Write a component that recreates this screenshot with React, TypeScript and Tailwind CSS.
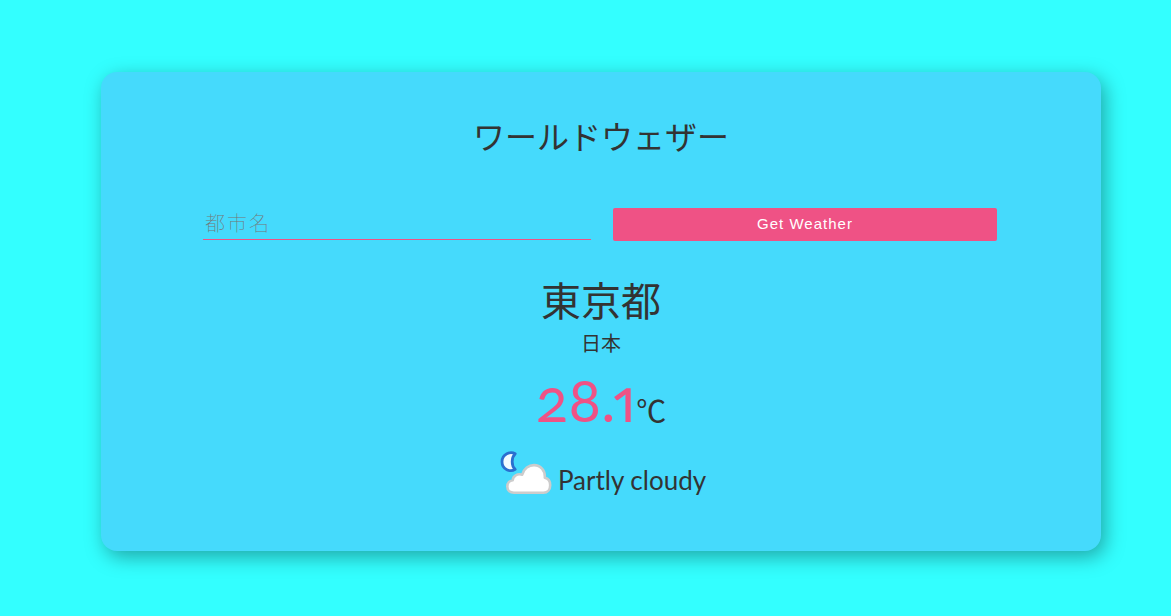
import { useState } from "react";

function PartlyCloudyNight() {
  return (
    <svg viewBox="0 0 64 64" className="size-16 shrink-0" role="img" aria-label="Partly cloudy night">
      <path
        d="M23.2 13.8C18.4 11 10 13.8 10 21.8C10 29.8 18.4 32.4 23.2 29.4C19.2 26 19.2 17.6 23.2 13.8Z"
        fill="#f2fbff"
        stroke="#2a6fcf"
        strokeWidth="2.8"
        strokeLinejoin="round"
      />
      <path
        d="M22 52.7C18 52.7 15.3 50.2 15.3 46.5C15.3 43 17.8 40.5 20.7 40.2C20.8 36 25.5 33.2 30.2 34.7C31.8 28.2 37 25.1 42 25.1C48.4 25.1 53.4 30 52.8 37.8C56 38.5 58.2 41.5 58.2 45.2C58.2 49.6 55.4 52.7 51.5 52.7Z"
        fill="#ffffff"
        stroke="#cccccc"
        strokeWidth="2.6"
        strokeLinejoin="round"
      />
    </svg>
  );
}

export default function App() {
  const [city, setCity] = useState("");

  return (
    <main className="min-h-screen bg-[#33ffff] pt-[72px] pr-[70px] pb-16 pl-[101px] font-['Lato','Noto_Sans_CJK_JP',sans-serif] text-[#333333]">
      <section className="flex flex-col rounded-2xl bg-[#45dafc] px-[102px] pt-10 pb-[47px] text-center shadow-[4px_6px_20px_rgba(0,0,0,0.35)]">
        <h1 className="text-[32px] leading-[50px]">ワールドウェザー</h1>
        <form className="mt-[46px] flex items-start gap-[22px] pr-0.5" onSubmit={(e) => e.preventDefault()}>
          <input
            type="text"
            aria-label="都市名"
            placeholder="都市名"
            value={city}
            onChange={(e) => setCity(e.target.value)}
            className="h-8 min-w-0 flex-1 border-b border-[#ef5285] bg-transparent px-0.5 pb-0.5 text-xl font-thin tracking-[2px] outline-none placeholder:text-[#757575]"
          />
          <button
            type="submit"
            className="h-[33px] min-w-0 flex-1 cursor-pointer rounded-xs bg-[#ef5285] font-['Liberation_Sans',Arial,sans-serif] text-[15px] tracking-[1px] text-white"
          >
            Get Weather
          </button>
        </form>
        <h2 className="mt-8 text-[40px] leading-[56px]">東京都</h2>
        <p className="text-xl leading-7">日本</p>
        <p className="mt-3 text-[30px] leading-[60px]">
          <span className="text-[60px] text-[#ef5285] oldstyle-nums proportional-nums">28.1</span>℃
        </p>
        <div className="flex items-center justify-center gap-0.5 pr-1 text-[26px]">
          <PartlyCloudyNight />
          <span className="pt-4">Partly cloudy</span>
        </div>
      </section>
    </main>
  );
}
